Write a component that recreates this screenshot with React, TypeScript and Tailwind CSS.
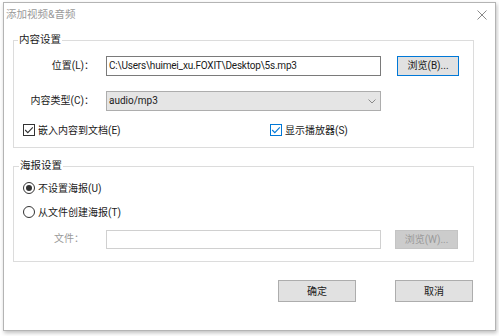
import React from "react";

const font = { fontFamily: 'Roboto, "Noto Sans CJK SC", sans-serif' };

function Check({ blue }: { blue?: boolean }) {
  const c = blue ? "#0078d7" : "#333333";
  return (
    <svg width="12" height="12" viewBox="0 0 12 12" className="shrink-0">
      <rect x="0.5" y="0.5" width="11" height="11" fill="white" stroke={c} />
      <path d="M2.2 6 L4.8 8.6 L9.8 3.3" fill="none" stroke={c} strokeWidth="1.1" />
    </svg>
  );
}

function Radio({ on }: { on?: boolean }) {
  return (
    <svg width="12" height="12" viewBox="0 0 12 12" className="shrink-0">
      <circle cx="6" cy="6" r="5.5" fill="white" stroke="#333333" />
      {on && <circle cx="6" cy="6" r="3" fill="#333333" />}
    </svg>
  );
}

function Label({ text, w, muted }: { text: string; w: number; muted?: boolean }) {
  return (
    <div className={`flex items-center shrink-0 ${muted ? "text-[#9a9a9a]" : ""}`}>
      <span className="text-right leading-[20px]" style={{ width: w }}>{text}</span>
      <span className="leading-[20px]">：</span>
    </div>
  );
}

export default function App() {
  return (
    <div className="w-[499px] h-[336px] bg-white overflow-hidden text-[10px] text-[#1a1a1a]" style={font}>
      <div className="ml-[3px] mt-[2px] w-[493px] h-[329px] border border-[#b4b4b4] bg-white shadow-[1px_2px_4px_rgba(0,0,0,0.25)] flex flex-col">
        <div className="h-[24px] flex items-center justify-between pl-[2px] pr-[8px]">
          <span className="text-[#9a9a9a] text-[10.5px]">添加视频&amp;音频</span>
          <svg width="10" height="10" viewBox="0 0 10 10">
            <path d="M0.5 0.5 L9.5 9.5 M9.5 0.5 L0.5 9.5" stroke="#8a8a8a" strokeWidth="1" />
          </svg>
        </div>

        <fieldset className="ml-[9px] mt-[5px] w-[461px] h-[116px] border border-[#dcdcdc] px-0">
          <legend className="ml-[4px] px-[1px] leading-[16px] text-[10.5px]">内容设置</legend>
          <div className="flex items-center mt-[8px]">
            <div className="w-[92px] pl-[2px] flex">
              <Label text="位置(L)" w={68} />
            </div>
            <div className="h-[20px] w-[275px] border border-[#7a7a7a] flex items-center pl-[2px] leading-[18px] tracking-[-0.2px]">
              C:\Users\huimei_xu.FOXIT\Desktop\5s.mp3
            </div>
            <div className="ml-[16px] h-[20px] w-[62px] border border-[#0078d7] bg-[#e1e1e1] flex items-center justify-center leading-[18px]">
              浏览(B)...
            </div>
          </div>
          <div className="flex items-center mt-[15px]">
            <div className="w-[92px] pl-[2px] flex">
              <Label text="内容类型(C)" w={68} />
            </div>
            <div className="h-[20px] w-[275px] border border-[#adadad] bg-[#e5e5e5] flex items-center justify-between pl-[2px] pr-[4px] leading-[18px]">
              <span>audio/mp3</span>
              <svg width="8" height="5" viewBox="0 0 8 5">
                <path d="M0.5 0.5 L4 4 L7.5 0.5" fill="none" stroke="#8a8a8a" strokeWidth="1" />
              </svg>
            </div>
          </div>
          <div className="flex items-center mt-[11px] h-[16px]">
            <div className="ml-[9px] w-[247px] flex items-center gap-[3px]">
              <Check />
              <span>嵌入内容到文档(E)</span>
            </div>
            <div className="flex items-center gap-[3px]">
              <Check blue />
              <span>显示播放器(S)</span>
            </div>
          </div>
        </fieldset>

        <fieldset className="ml-[9px] mt-[10px] w-[461px] h-[104px] border border-[#dcdcdc] px-0">
          <legend className="ml-[5px] px-[1px] leading-[16px] text-[10.5px]">海报设置</legend>
          <div className="flex items-center gap-[3px] ml-[9px] mt-[6px] h-[16px]">
            <Radio on />
            <span>不设置海报(U)</span>
          </div>
          <div className="flex items-center gap-[3px] ml-[9px] mt-[8px] h-[16px]">
            <Radio />
            <span>从文件创建海报(T)</span>
          </div>
          <div className="flex items-center mt-[9px]">
            <div className="w-[92px] pl-[2px] flex">
              <Label text="文件" w={58} muted />
            </div>
            <div className="h-[19px] w-[275px] border border-[#d0d0d0]" />
            <div className="ml-[14px] h-[19px] w-[63px] border border-[#c4c4c4] bg-[#cccccc] text-[#9a9a9a] flex items-center justify-center leading-[17px]">
              浏览(W)...
            </div>
          </div>
        </fieldset>

        <div className="flex mt-[18px] ml-[274px] gap-[39px]">
          <div className="h-[22px] w-[78px] border border-[#adadad] bg-[#e1e1e1] flex items-center justify-center">确定</div>
          <div className="h-[22px] w-[78px] border border-[#adadad] bg-[#e1e1e1] flex items-center justify-center">取消</div>
        </div>
      </div>
    </div>
  );
}
